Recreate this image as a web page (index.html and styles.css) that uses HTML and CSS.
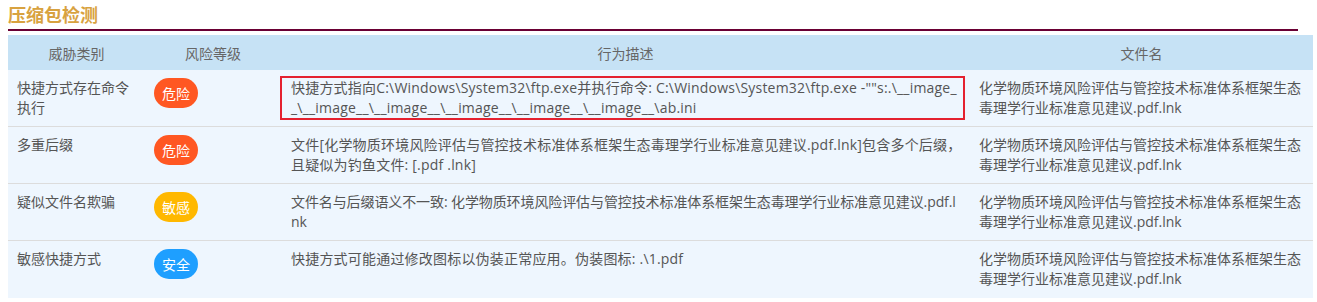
FILE: index.html
```html
<!DOCTYPE html>
<html lang="zh-CN">
<head>
<meta charset="utf-8">
<title>压缩包检测</title>
<link rel="stylesheet" href="styles.css">
</head>
<body>
<section class="panel">
  <h2 class="title">压缩包检测</h2>
  <table class="grid">
    <colgroup>
      <col class="c1"><col class="c2"><col class="c3"><col class="c4">
    </colgroup>
    <thead>
      <tr><th>威胁类别</th><th>风险等级</th><th>行为描述</th><th>文件名</th></tr>
    </thead>
    <tbody>
      <tr>
        <td>快捷方式存在命令执行</td>
        <td><span class="badge danger">危险</span></td>
        <td class="dcell"><div class="desc hit">快捷方式指向C:\Windows\System32\ftp.exe并执行命令: C:\Windows\System32\ftp.exe -""s:.\__image__\__image__\__image__\__image__\__image__\__image__\ab.ini</div></td>
        <td>化学物质环境风险评估与管控技术标准体系框架生态毒理学行业标准意见建议.pdf.lnk</td>
      </tr>
      <tr>
        <td>多重后缀</td>
        <td><span class="badge danger">危险</span></td>
        <td class="dcell"><div class="desc">文件[化学物质环境风险评估与管控技术标准体系框架生态毒理学行业标准意见建议.pdf.lnk]包含多个后缀，且疑似为钓鱼文件: [.pdf .lnk]</div></td>
        <td>化学物质环境风险评估与管控技术标准体系框架生态毒理学行业标准意见建议.pdf.lnk</td>
      </tr>
      <tr>
        <td>疑似文件名欺骗</td>
        <td><span class="badge warn">敏感</span></td>
        <td class="dcell"><div class="desc snug">文件名与后缀语义不一致: 化学物质环境风险评估与管控技术标准体系框架生态毒理学行业标准意见建议.pdf.lnk</div></td>
        <td>化学物质环境风险评估与管控技术标准体系框架生态毒理学行业标准意见建议.pdf.lnk</td>
      </tr>
      <tr>
        <td>敏感快捷方式</td>
        <td><span class="badge safe">安全</span></td>
        <td class="dcell"><div class="desc">快捷方式可能通过修改图标以伪装正常应用。伪装图标: .\1.pdf</div></td>
        <td>化学物质环境风险评估与管控技术标准体系框架生态毒理学行业标准意见建议.pdf.lnk</td>
      </tr>
    </tbody>
  </table>
</section>
</body>
</html>
```
FILE: styles.css
```css
html, body {
  margin: 0;
  padding: 0;
  background: #ffffff;
}
body {
  padding: 0 8px;
  font-family: "Open Sans", "Noto Sans CJK SC", sans-serif;
  font-size: 14px;
  color: #555555;
}
.panel {
  display: flex;
  flex-direction: column;
}
.title {
  margin: 0;
  width: 1290px;
  height: 26px;
  padding-top: 3px;
  border-bottom: 2px solid #6a0034;
  font-family: "Noto Sans CJK SC", sans-serif;
  font-size: 18px;
  line-height: 22px;
  font-weight: 700;
  color: #d8a23f;
}
.grid {
  margin-top: 4px;
  width: 1305px;
  table-layout: fixed;
  border-collapse: collapse;
  background: #eef6fe;
}
.c1 { width: 137px; }
.c2 { width: 136px; }
.c3 { width: 689px; }
.c4 { width: 343px; }
.grid th {
  height: 35px;
  padding: 0;
  background: #c6e2f5;
  font-weight: 400;
  color: #666666;
  text-align: center;
  line-height: 20px;
  font-family: "Noto Sans CJK SC", sans-serif;
}
.grid td {
  height: 40px;
  padding: 8px 10px 8px 9px;
  vertical-align: top;
  line-height: 20px;
  word-break: break-all;
  border-bottom: 1px solid #dcdcdc;
}
.grid tbody tr:last-child td {
  border-bottom: none;
  height: 41px;
}
.grid td.dcell {
  padding: 8px 0 8px 10px;
}
.desc {
  width: 672px;
  margin: -2px 0 -2px -11px;
  padding-left: 9px;
  border: 2px solid transparent;
  letter-spacing: 0.2px;
}
.desc.snug {
  letter-spacing: -0.1px;
}
.desc.hit {
  border-color: #e4212f;
}
.badge {
  display: inline-block;
  height: 30px;
  padding: 0 8px;
  border-radius: 15px;
  line-height: 30px;
  color: #ffffff;
  font-family: "Noto Sans CJK SC", sans-serif;
  font-size: 14px;
}
.danger { background: #ff5722; }
.warn { background: #ffb800; }
.safe { background: #1e9fff; }
```
